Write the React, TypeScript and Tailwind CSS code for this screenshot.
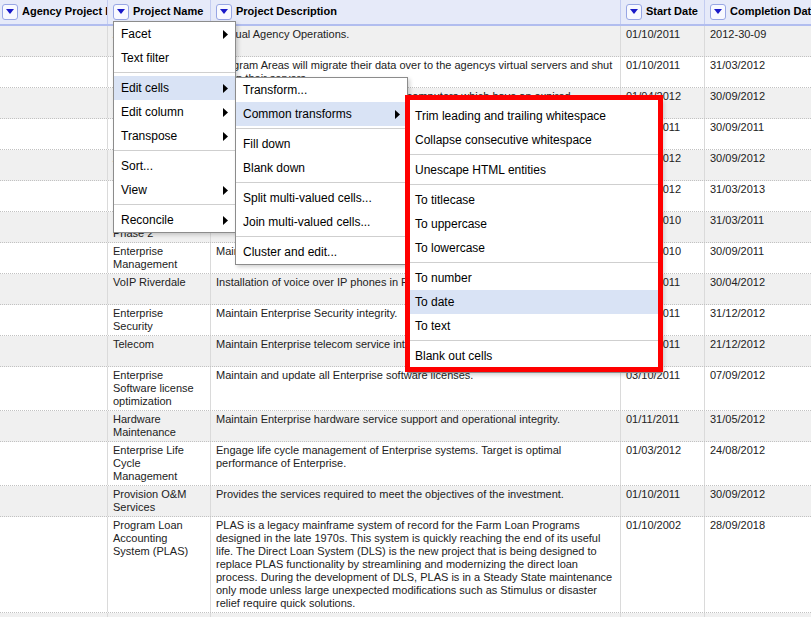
import React from "react";

type Row = { name: string; desc: string; start: string; end: string };

const rows: Row[] = [
  { name: "Agency Operations", desc: "Annual Agency Operations.", start: "01/10/2011", end: "2012-30-09" },
  {
    name: "Server Consolidation",
    desc: "Program Areas will migrate their data over to the agencys virtual servers and shut down their servers.",
    start: "01/10/2011",
    end: "31/03/2012",
  },
  {
    name: "Computer Refresh",
    desc: "Replace outdated laptops and desktop computers which have an expired warranty.",
    start: "01/04/2012",
    end: "30/09/2012",
  },
  { name: "Network Operations", desc: "Maintain Enterprise network operations.", start: "01/10/2011", end: "30/09/2011" },
  { name: "Active Directory", desc: "Maintain Enterprise directory services.", start: "01/10/2012", end: "30/09/2012" },
  { name: "Data Center", desc: "Consolidate Enterprise data center facilities.", start: "01/04/2012", end: "31/03/2013" },
  { name: "Network Upgrade Phase 2", desc: "Upgrade the Enterprise network.", start: "01/10/2010", end: "31/03/2011" },
  { name: "Enterprise Management", desc: "Maintain Enterprise Management services.", start: "01/10/2010", end: "30/09/2011" },
  {
    name: "VoIP Riverdale",
    desc: "Installation of voice over IP phones in Riverdale offices.",
    start: "01/10/2011",
    end: "30/04/2012",
  },
  { name: "Enterprise Security", desc: "Maintain Enterprise Security integrity.", start: "01/10/2011", end: "31/12/2012" },
  { name: "Telecom", desc: "Maintain Enterprise telecom service integrity.", start: "01/10/2011", end: "21/12/2012" },
  {
    name: "Enterprise Software license optimization",
    desc: "Maintain and update all Enterprise software licenses.",
    start: "03/10/2011",
    end: "07/09/2012",
  },
  {
    name: "Hardware Maintenance",
    desc: "Maintain Enterprise hardware service support and operational integrity.",
    start: "01/11/2011",
    end: "31/05/2012",
  },
  {
    name: "Enterprise Life Cycle Management",
    desc: "Engage life cycle management of Enterprise systems. Target is optimal performance of Enterprise.",
    start: "01/03/2012",
    end: "24/08/2012",
  },
  {
    name: "Provision O&M Services",
    desc: "Provides the services required to meet the objectives of the investment.",
    start: "01/10/2011",
    end: "30/09/2012",
  },
  {
    name: "Program Loan Accounting System (PLAS)",
    desc: "PLAS is a legacy mainframe system of record for the Farm Loan Programs designed in the late 1970s. This system is quickly reaching the end of its useful life. The Direct Loan System (DLS) is the new project that is being designed to replace PLAS functionality by streamlining and modernizing the direct loan process. During the development of DLS, PLAS is in a Steady State maintenance only mode unless large unexpected modifications such as Stimulus or disaster relief require quick solutions.",
    start: "01/10/2002",
    end: "28/09/2018",
  },
  { name: "Farm Business Plan", desc: "Farm Business Plan system.", start: "01/10/2011", end: "30/09/2012" },
];

type Entry = { label: string; arrow?: boolean; active?: boolean } | "sep";

const menuMain: Entry[] = [
  { label: "Facet", arrow: true },
  { label: "Text filter" },
  "sep",
  { label: "Edit cells", arrow: true, active: true },
  { label: "Edit column", arrow: true },
  { label: "Transpose", arrow: true },
  "sep",
  { label: "Sort..." },
  { label: "View", arrow: true },
  "sep",
  { label: "Reconcile", arrow: true },
];

const menuEdit: Entry[] = [
  { label: "Transform..." },
  { label: "Common transforms", arrow: true, active: true },
  "sep",
  { label: "Fill down" },
  { label: "Blank down" },
  "sep",
  { label: "Split multi-valued cells..." },
  { label: "Join multi-valued cells..." },
  "sep",
  { label: "Cluster and edit..." },
];

const menuCommon: Entry[] = [
  { label: "Trim leading and trailing whitespace" },
  { label: "Collapse consecutive whitespace" },
  "sep",
  { label: "Unescape HTML entities" },
  "sep",
  { label: "To titlecase" },
  { label: "To uppercase" },
  { label: "To lowercase" },
  "sep",
  { label: "To number" },
  { label: "To date", active: true },
  { label: "To text" },
  "sep",
  { label: "Blank out cells" },
];

function DropButton() {
  return (
    <span className="flex h-[16px] w-[16px] shrink-0 items-center justify-center rounded-[3px] border border-[#98a6e4] bg-[#f8f9ff]">
      <svg width="8" height="5" viewBox="0 0 8 5">
        <path d="M0 0h8L4 5z" fill="#1a1ac8" />
      </svg>
    </span>
  );
}

function HeadCell({ label, className }: { label: string; className: string }) {
  return (
    <div
      className={`flex shrink-0 items-center gap-[4px] overflow-hidden whitespace-nowrap pb-[1px] font-bold text-black ${className}`}
    >
      <DropButton />
      <span>{label}</span>
    </div>
  );
}

function Menu({ items, className }: { items: Entry[]; className: string }) {
  return (
    <div
      className={`absolute z-10 border border-[#8c8c8c] bg-white text-[12px] leading-[24px] text-black shadow-[2px_2px_4px_rgba(0,0,0,0.18)] ${className}`}
    >
      {items.map((it, i) =>
        it === "sep" ? (
          <div key={i} className="mb-[3px] mt-[2px] h-px bg-[#cfcfcf]" />
        ) : (
          <div
            key={i}
            className={`flex h-[24px] items-center justify-between whitespace-nowrap px-[7px] ${it.active ? "bg-[#d9e3f5]" : ""}`}
          >
            <span>{it.label}</span>
            {it.arrow && (
              <svg width="5" height="9" viewBox="0 0 5 9">
                <path d="M0 0L5 4.5L0 9z" fill="#000" />
              </svg>
            )}
          </div>
        )
      )}
    </div>
  );
}

export default function App() {
  return (
    <div className="relative h-[617px] w-full overflow-hidden bg-white font-['Liberation_Sans',Arial,sans-serif] text-[11px] leading-[13px] text-[#222]">
      {/* header */}
      <div className="flex h-[26px] border-b-2 border-[#b1bdef] bg-[#e6eaf9]">
        <HeadCell label="Agency Project ID" className="w-[108px] border-r border-[#c4cdf1] pl-[2px]" />
        <HeadCell label="Project Name" className="w-[103px] border-r border-[#c4cdf1] pl-[5px]" />
        <HeadCell label="Project Description" className="w-[410px] border-r border-[#c4cdf1] pl-[5px]" />
        <HeadCell label="Start Date" className="w-[84px] border-r border-[#c4cdf1] pl-[5px]" />
        <HeadCell label="Completion Date" className="min-w-0 flex-1 pl-[5px]" />
      </div>

      {/* rows */}
      {rows.map((r, i) => (
        <div
          key={i}
          className={`flex border-b border-dotted border-[#c2c2c2] ${i % 2 === 0 ? "bg-[#f0f0f0]" : "bg-white"}`}
        >
          <div className="min-h-[30px] w-[108px] shrink-0 border-r border-[#dadada]" />
          <div className="min-h-[30px] w-[103px] shrink-0 border-r border-[#dadada] pb-[2px] pl-[5px] pr-[6px] pt-[2px]">
            {r.name}
          </div>
          <div className="min-h-[30px] w-[410px] shrink-0 border-r border-[#dadada] px-[5px] pb-[2px] pt-[2px]">
            {r.desc}
          </div>
          <div className="min-h-[30px] w-[84px] shrink-0 border-r border-[#dadada] px-[5px] pb-[2px] pt-[2px]">
            {r.start}
          </div>
          <div className="min-h-[30px] min-w-0 flex-1 px-[5px] pb-[2px] pt-[2px]">{r.end}</div>
        </div>
      ))}

      {/* column menu and its submenus */}
      <Menu items={menuMain} className="left-[113px] top-[21px] w-[123px]" />
      <Menu items={menuEdit} className="left-[235px] top-[77px] w-[173px]" />
      <Menu items={menuCommon} className="left-[407px] top-[99px] w-[255px] pb-[4px] pt-[4px]" />

      {/* highlight frame */}
      <div className="absolute left-[405px] top-[95px] z-20 h-[277px] w-[258px] border-[5px] border-[#ff0000]" />
    </div>
  );
}
